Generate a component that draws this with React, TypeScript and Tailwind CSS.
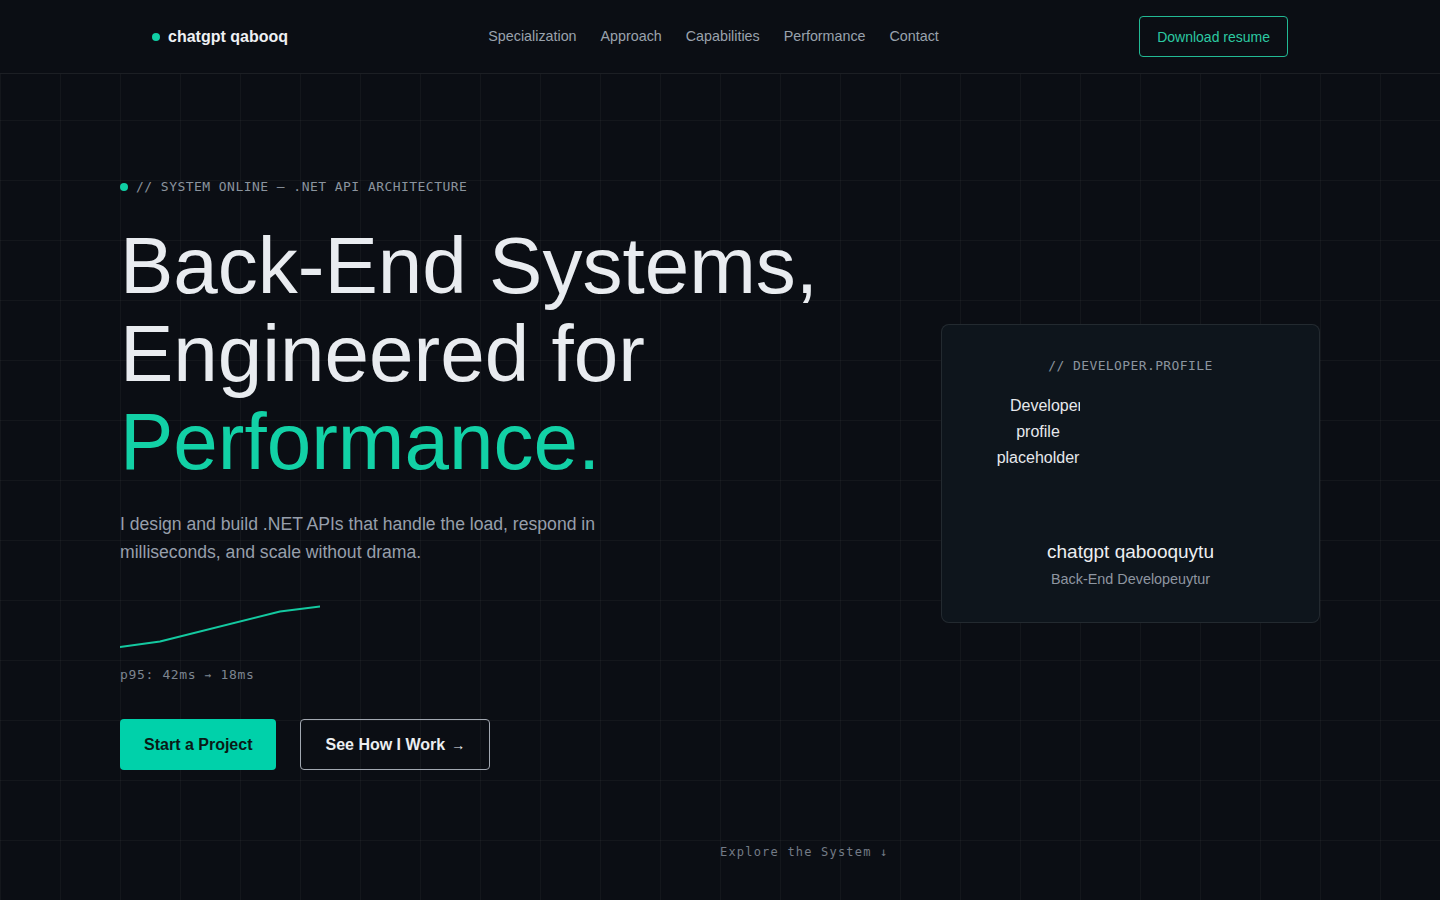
const navLinks = ["Specialization", "Approach", "Capabilities", "Performance", "Contact"];

const sans = "font-['Liberation_Sans',Arial,sans-serif]";
const mono = "font-['DejaVu_Sans_Mono','Liberation_Mono',monospace]";

function Header() {
  return (
    <header className="relative z-10 border-b border-white/[0.07] bg-[#0b0e14]">
      <div className="mx-auto flex h-[73px] max-w-[1200px] items-center justify-between px-8">
        <a href="#" className="flex items-center gap-2">
          <span className="size-2 rounded-full bg-[#10cfa5]" />
          <span className="text-base font-bold text-[#eef0f3]">chatgpt qabooq</span>
        </a>
        <nav className="flex items-center gap-6 pt-px text-[14.3px] text-[#9aa2ad]">
          {navLinks.map((link) => (
            <a key={link} href="#">
              {link}
            </a>
          ))}
        </nav>
        <a
          href="#"
          className="flex h-[41px] items-center rounded border border-[#22b994] px-[17px] text-sm text-[#2cc9a2]"
        >
          Download resume
        </a>
      </div>
    </header>
  );
}

function Sparkline() {
  return (
    <svg width="200" height="44" viewBox="0 0 200 44" className="block">
      <polyline
        points="0,42 40,36.5 160,6.5 200,1.5"
        fill="none"
        stroke="#14c9a0"
        strokeWidth="2"
        strokeLinejoin="round"
        strokeLinecap="round"
      />
    </svg>
  );
}

function ProfileCard() {
  return (
    <div className="flex w-[379px] flex-col rounded-lg border border-white/[0.09] bg-[#0e151c] pt-[31px] pb-[33px]">
      <p className={`${mono} text-center text-[13px] leading-5 tracking-[0.03em] text-[#8b949e]`}>
        // DEVELOPER.PROFILE
      </p>
      <div className="ml-[54px] mt-[17px] h-[129px] w-[84px] overflow-hidden text-center text-base leading-[26px] text-[#e6e8ec]">
        <div className="ml-[14px] whitespace-nowrap text-left">Developer</div>
        <div>profile</div>
        <div>placeholder</div>
      </div>
      <div className="mt-4 text-center">
        <p className="text-[19px] leading-7 text-[#eceef1]">chatgpt qabooquytu</p>
        <p className="mt-[3px] text-[14.4px] leading-5 text-[#8e96a1]">Back-End Developeuytur</p>
      </div>
    </div>
  );
}

export default function App() {
  return (
    <div
      className={`${sans} relative min-h-screen overflow-hidden bg-[#0b0e14] bg-[linear-gradient(to_right,rgba(255,255,255,0.035)_1px,transparent_1px),linear-gradient(to_bottom,rgba(255,255,255,0.035)_1px,transparent_1px)] bg-[size:60px_60px]`}
    >
      <Header />

      <main className="mx-auto grid max-w-[1200px] grid-cols-[1fr_379px] items-center pt-[103px]">
        <section>
          <p className={`${mono} flex items-center gap-2 text-[13px] leading-5 tracking-[0.035em] text-[#8b949e]`}>
            <span className="size-2 rounded-full bg-[#10cfa5]" />
            // SYSTEM ONLINE — .NET API ARCHITECTURE
          </p>
          <h1 className="mt-[25px] text-[80px] font-normal leading-[88px] text-[#e9ecf0]">
            Back-End Systems,
            <br />
            Engineered for
            <br />
            <span className="text-[#12d1a6]">Performance.</span>
          </h1>
          <p className="mt-6 max-w-[520px] text-[17.6px] leading-7 text-[#979fab]">
            I design and build .NET APIs that handle the load, respond in milliseconds, and scale without drama.
          </p>
          <div className="mt-[39px]">
            <Sparkline />
          </div>
          <p className={`${mono} mt-4 text-[13px] leading-5 tracking-[0.05em] text-[#7d8590]`}>
            p95: 42ms <span className="text-[11px]">→</span> 18ms
          </p>
          <div className="mt-[33px] flex gap-6">
            <a
              href="#"
              className="flex h-[51px] items-center rounded bg-[#00d1aa] px-6 text-base font-bold text-[#0a1a16]"
            >
              Start a Project
            </a>
            <a
              href="#"
              className="flex h-[51px] items-center gap-1.5 rounded border border-[#a2a8b1] px-6 text-base font-bold text-[#eceef1]"
            >
              See How I Work <span className="text-sm">→</span>
            </a>
          </div>
        </section>

        <ProfileCard />
      </main>

      <p
        className={`${mono} absolute bottom-10 left-1/2 text-xs leading-4 tracking-[0.1em] text-[#737b86]`}
      >
        Explore the System ↓
      </p>
    </div>
  );
}
